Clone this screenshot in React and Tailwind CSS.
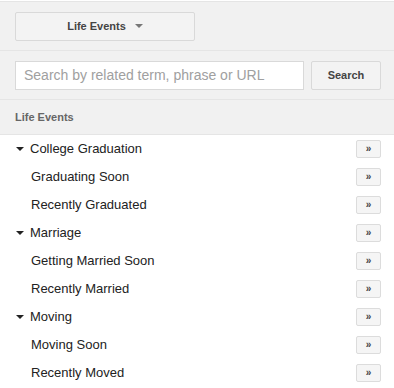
import React from "react";

const groups = [
  { name: "College Graduation", items: ["Graduating Soon", "Recently Graduated"] },
  { name: "Marriage", items: ["Getting Married Soon", "Recently Married"] },
  { name: "Moving", items: ["Moving Soon", "Recently Moved"] },
];

function AddButton() {
  return (
    <button className="w-[25px] h-[18px] rounded-[2px] border border-[#dcdcdc] bg-[#f5f5f5] flex items-center justify-center text-[10px] font-bold leading-none text-[#444]">
      »
    </button>
  );
}

function Row({ label, parent }) {
  return (
    <div className="h-[28px] flex items-center justify-between pr-[13px]">
      {parent ? (
        <div className="flex items-center pl-[16px]">
          <span className="w-0 h-0 border-l-[4px] border-r-[4px] border-t-[4px] border-l-transparent border-r-transparent border-t-[#222] mr-[6px]" />
          <span className="text-[13px] text-[#222]">{label}</span>
        </div>
      ) : (
        <span className="pl-[31px] text-[13px] text-[#222]">{label}</span>
      )}
      <AddButton />
    </div>
  );
}

export default function App() {
  return (
    <div className="w-[394px] h-[388px] bg-white overflow-hidden font-['Liberation_Sans',Arial,sans-serif]">
      <div className="bg-[#f1f1f1] border-t border-[#e5e5e5] mt-[1px]">
        <div className="h-[49px] flex items-center px-[15px] border-b border-[#e5e5e5]">
          <button className="w-[180px] h-[29px] rounded-[2px] border border-[#d9d9d9] bg-[#f3f3f3] flex items-center justify-center gap-[9px] text-[11px] font-bold text-[#444]">
            Life Events
            <span className="w-0 h-0 border-l-[4px] border-r-[4px] border-t-[4px] border-l-transparent border-r-transparent border-t-[#777]" />
          </button>
        </div>
        <div className="h-[49px] flex items-center pl-[15px] gap-[7px] border-b border-[#e5e5e5]">
          <div className="w-[289px] shrink-0 h-[29px] bg-white border border-[#d9d9d9] flex items-center px-[8px] text-[14px] text-[#a0a0a0]">
            Search by related term, phrase or URL
          </div>
          <button className="w-[70px] shrink-0 h-[29px] rounded-[2px] border border-[#d9d9d9] bg-[#f3f3f3] text-[11px] font-bold text-[#444]">
            Search
          </button>
        </div>
        <div className="h-[35px] flex items-center px-[15px] border-b border-[#e5e5e5] text-[11px] font-bold text-[#666]">
          Life Events
        </div>
      </div>
      <div>
        {groups.map((g) => (
          <div key={g.name}>
            <Row label={g.name} parent />
            {g.items.map((i) => (
              <Row key={i} label={i} />
            ))}
          </div>
        ))}
      </div>
    </div>
  );
}
